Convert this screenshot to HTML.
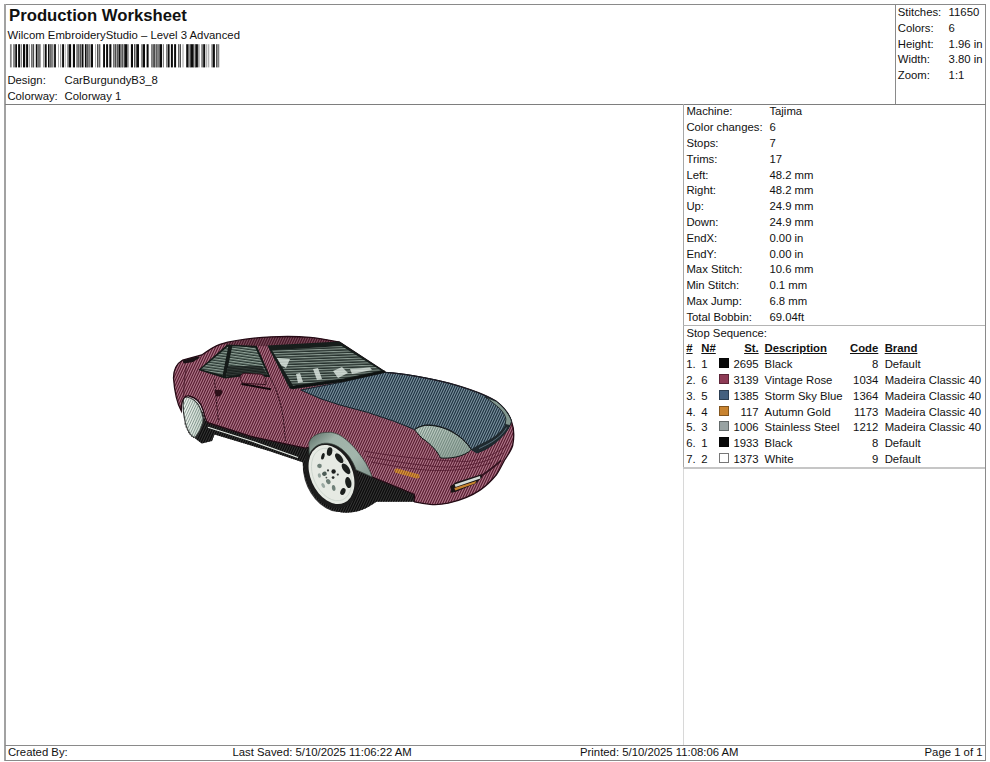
<!DOCTYPE html>
<html><head><meta charset="utf-8"><title>Production Worksheet</title>
<style>
html,body{margin:0;padding:0;background:#fff;}
body{width:990px;height:762px;position:relative;overflow:hidden;font-family:"Liberation Sans",sans-serif;color:#111;}
.t{position:absolute;white-space:nowrap;font-size:11.33px;line-height:1;}
.b{font-weight:bold;}
.u{text-decoration:underline;text-decoration-thickness:1px;text-underline-offset:1px;}
.ln{position:absolute;background:#8c8c8c;}
.sw{position:absolute;width:10px;height:10px;box-sizing:border-box;}
</style></head><body>

<div class="ln" style="left:4.5px;top:4px;width:981.5px;height:1.3px;background:#8a8a8a"></div>
<div class="ln" style="left:4.3px;top:4px;width:1.6px;height:757px;background:#a2a2a2"></div>
<div class="ln" style="left:985px;top:4px;width:1.2px;height:757px;background:#8a8a8a"></div>
<div class="ln" style="left:4.5px;top:760px;width:981.7px;height:1.2px;background:#8a8a8a"></div>
<div class="ln" style="left:4.5px;top:103.5px;width:981.5px;height:1.3px;background:#7e7e7e"></div>
<div class="ln" style="left:895.3px;top:4px;width:1.1px;height:100px;background:#8a8a8a"></div>
<div class="ln" style="left:4.5px;top:744.5px;width:981.5px;height:1.2px;background:#8a8a8a"></div>
<div class="ln" style="left:683px;top:104px;width:1.1px;height:364px;background:#a8a8a8"></div>
<div class="ln" style="left:683px;top:468px;width:1.1px;height:277px;background:#d8d8d8"></div>
<div class="ln" style="left:683px;top:325px;width:302px;height:1.1px;background:#b4b4b4"></div>
<div class="ln" style="left:683px;top:467px;width:302px;height:1.6px;background:#c6c6c6"></div>
<div class="t b" style="left:9.1px;top:7.56px;font-size:16.7px;">Production Worksheet</div>
<div class="t " style="left:7.60px;top:29.81px;">Wilcom EmbroideryStudio – Level 3 Advanced</div>
<div class="t " style="left:7.40px;top:74.81px;">Design:</div>
<div class="t " style="left:64.60px;top:74.81px;">CarBurgundyB3_8</div>
<div class="t " style="left:7.40px;top:90.61px;">Colorway:</div>
<div class="t " style="left:64.60px;top:90.61px;">Colorway 1</div>
<div class="t " style="left:897.80px;top:6.91px;">Stitches:</div>
<div class="t " style="left:948.60px;top:6.91px;">11650</div>
<div class="t " style="left:897.80px;top:22.71px;">Colors:</div>
<div class="t " style="left:948.60px;top:22.71px;">6</div>
<div class="t " style="left:897.80px;top:38.51px;">Height:</div>
<div class="t " style="left:948.60px;top:38.51px;">1.96 in</div>
<div class="t " style="left:897.80px;top:54.31px;">Width:</div>
<div class="t " style="left:948.60px;top:54.31px;">3.80 in</div>
<div class="t " style="left:897.80px;top:70.11px;">Zoom:</div>
<div class="t " style="left:948.60px;top:70.11px;">1:1</div>
<div class="t " style="left:686.40px;top:106.41px;">Machine:</div>
<div class="t " style="left:769.40px;top:106.41px;">Tajima</div>
<div class="t " style="left:686.40px;top:122.21px;">Color changes:</div>
<div class="t " style="left:769.40px;top:122.21px;">6</div>
<div class="t " style="left:686.40px;top:138.01px;">Stops:</div>
<div class="t " style="left:769.40px;top:138.01px;">7</div>
<div class="t " style="left:686.40px;top:153.81px;">Trims:</div>
<div class="t " style="left:769.40px;top:153.81px;">17</div>
<div class="t " style="left:686.40px;top:169.61px;">Left:</div>
<div class="t " style="left:769.40px;top:169.61px;">48.2 mm</div>
<div class="t " style="left:686.40px;top:185.41px;">Right:</div>
<div class="t " style="left:769.40px;top:185.41px;">48.2 mm</div>
<div class="t " style="left:686.40px;top:201.21px;">Up:</div>
<div class="t " style="left:769.40px;top:201.21px;">24.9 mm</div>
<div class="t " style="left:686.40px;top:217.01px;">Down:</div>
<div class="t " style="left:769.40px;top:217.01px;">24.9 mm</div>
<div class="t " style="left:686.40px;top:232.81px;">EndX:</div>
<div class="t " style="left:769.40px;top:232.81px;">0.00 in</div>
<div class="t " style="left:686.40px;top:248.61px;">EndY:</div>
<div class="t " style="left:769.40px;top:248.61px;">0.00 in</div>
<div class="t " style="left:686.40px;top:264.41px;">Max Stitch:</div>
<div class="t " style="left:769.40px;top:264.41px;">10.6 mm</div>
<div class="t " style="left:686.40px;top:280.21px;">Min Stitch:</div>
<div class="t " style="left:769.40px;top:280.21px;">0.1 mm</div>
<div class="t " style="left:686.40px;top:296.01px;">Max Jump:</div>
<div class="t " style="left:769.40px;top:296.01px;">6.8 mm</div>
<div class="t " style="left:686.40px;top:311.81px;">Total Bobbin:</div>
<div class="t " style="left:769.40px;top:311.81px;">69.04ft</div>
<div class="t " style="left:686.40px;top:327.61px;">Stop Sequence:</div>
<div class="t b u" style="left:686.30px;top:343.41px;">#</div>
<div class="t b u" style="left:701.30px;top:343.41px;">N#</div>
<div class="t b u" style="right:231.40px;top:343.41px;">St.</div>
<div class="t b u" style="left:764.60px;top:343.41px;">Description</div>
<div class="t b u" style="right:111.70px;top:343.41px;">Code</div>
<div class="t b u" style="left:884.70px;top:343.41px;">Brand</div>
<div class="t " style="left:686.30px;top:359.21px;">1.</div>
<div class="t " style="left:701.30px;top:359.21px;">1</div>
<div class="sw" style="left:719.3px;top:358.20px;background:#0a0a0a;border:1px solid rgba(0,0,0,0.35);"></div>
<div class="t " style="right:231.40px;top:359.21px;">2695</div>
<div class="t " style="left:764.60px;top:359.21px;">Black</div>
<div class="t " style="right:111.70px;top:359.21px;">8</div>
<div class="t " style="left:884.70px;top:359.21px;">Default</div>
<div class="t " style="left:686.30px;top:375.01px;">2.</div>
<div class="t " style="left:701.30px;top:375.01px;">6</div>
<div class="sw" style="left:719.3px;top:374.00px;background:#8e3a55;border:1px solid rgba(0,0,0,0.35);"></div>
<div class="t " style="right:231.40px;top:375.01px;">3139</div>
<div class="t " style="left:764.60px;top:375.01px;">Vintage Rose</div>
<div class="t " style="right:111.70px;top:375.01px;">1034</div>
<div class="t " style="left:884.70px;top:375.01px;">Madeira Classic 40</div>
<div class="t " style="left:686.30px;top:390.81px;">3.</div>
<div class="t " style="left:701.30px;top:390.81px;">5</div>
<div class="sw" style="left:719.3px;top:389.80px;background:#44607f;border:1px solid rgba(0,0,0,0.35);"></div>
<div class="t " style="right:231.40px;top:390.81px;">1385</div>
<div class="t " style="left:764.60px;top:390.81px;">Storm Sky Blue</div>
<div class="t " style="right:111.70px;top:390.81px;">1364</div>
<div class="t " style="left:884.70px;top:390.81px;">Madeira Classic 40</div>
<div class="t " style="left:686.30px;top:406.61px;">4.</div>
<div class="t " style="left:701.30px;top:406.61px;">4</div>
<div class="sw" style="left:719.3px;top:405.60px;background:#c8832f;border:1px solid rgba(0,0,0,0.35);"></div>
<div class="t " style="right:231.40px;top:406.61px;">117</div>
<div class="t " style="left:764.60px;top:406.61px;">Autumn Gold</div>
<div class="t " style="right:111.70px;top:406.61px;">1173</div>
<div class="t " style="left:884.70px;top:406.61px;">Madeira Classic 40</div>
<div class="t " style="left:686.30px;top:422.41px;">5.</div>
<div class="t " style="left:701.30px;top:422.41px;">3</div>
<div class="sw" style="left:719.3px;top:421.40px;background:#98a3a3;border:1px solid rgba(0,0,0,0.35);"></div>
<div class="t " style="right:231.40px;top:422.41px;">1006</div>
<div class="t " style="left:764.60px;top:422.41px;">Stainless Steel</div>
<div class="t " style="right:111.70px;top:422.41px;">1212</div>
<div class="t " style="left:884.70px;top:422.41px;">Madeira Classic 40</div>
<div class="t " style="left:686.30px;top:438.21px;">6.</div>
<div class="t " style="left:701.30px;top:438.21px;">1</div>
<div class="sw" style="left:719.3px;top:437.20px;background:#0a0a0a;border:1px solid rgba(0,0,0,0.35);"></div>
<div class="t " style="right:231.40px;top:438.21px;">1933</div>
<div class="t " style="left:764.60px;top:438.21px;">Black</div>
<div class="t " style="right:111.70px;top:438.21px;">8</div>
<div class="t " style="left:884.70px;top:438.21px;">Default</div>
<div class="t " style="left:686.30px;top:454.01px;">7.</div>
<div class="t " style="left:701.30px;top:454.01px;">2</div>
<div class="sw" style="left:719.3px;top:453.00px;background:#ffffff;border:1px solid #777;"></div>
<div class="t " style="right:231.40px;top:454.01px;">1373</div>
<div class="t " style="left:764.60px;top:454.01px;">White</div>
<div class="t " style="right:111.70px;top:454.01px;">9</div>
<div class="t " style="left:884.70px;top:454.01px;">Default</div>
<div class="t " style="left:7.90px;top:747.01px;">Created By:</div>
<div class="t " style="left:232.50px;top:747.01px;">Last Saved: 5/10/2025 11:06:22 AM</div>
<div class="t " style="left:580.00px;top:747.01px;">Printed: 5/10/2025 11:08:06 AM</div>
<div class="t " style="right:7.50px;top:747.01px;">Page 1 of 1</div>
<svg style="position:absolute;left:0;top:0" width="230" height="72" viewBox="0 0 230 72"><rect x="9.95" y="44.2" width="1.75" height="23.2" fill="#808080"/><rect x="13.10" y="44.2" width="1.80" height="23.2" fill="#808080"/><rect x="15.25" y="44.2" width="1.75" height="23.2" fill="#0c0c0c"/><rect x="18.10" y="44.2" width="2.10" height="23.2" fill="#0c0c0c"/><rect x="20.90" y="44.2" width="1.10" height="23.2" fill="#808080"/><rect x="23.00" y="44.2" width="2.20" height="23.2" fill="#0c0c0c"/><rect x="26.10" y="44.2" width="1.90" height="23.2" fill="#0c0c0c"/><rect x="28.70" y="44.2" width="1.05" height="23.2" fill="#808080"/><rect x="31.20" y="44.2" width="3.10" height="23.2" fill="#b4b4b4"/><rect x="31.40" y="44.2" width="0.85" height="23.2" fill="#3a3a3a"/><rect x="33.15" y="44.2" width="0.85" height="23.2" fill="#3a3a3a"/><rect x="35.80" y="44.2" width="1.70" height="23.2" fill="#0c0c0c"/><rect x="37.50" y="44.2" width="3.20" height="23.2" fill="#b4b4b4"/><rect x="37.70" y="44.2" width="0.85" height="23.2" fill="#3a3a3a"/><rect x="39.45" y="44.2" width="0.85" height="23.2" fill="#3a3a3a"/><rect x="43.20" y="44.2" width="1.40" height="23.2" fill="#808080"/><rect x="45.00" y="44.2" width="1.70" height="23.2" fill="#0c0c0c"/><rect x="48.00" y="44.2" width="1.60" height="23.2" fill="#0c0c0c"/><rect x="49.60" y="44.2" width="4.20" height="23.2" fill="#b4b4b4"/><rect x="49.80" y="44.2" width="0.85" height="23.2" fill="#3a3a3a"/><rect x="51.55" y="44.2" width="0.85" height="23.2" fill="#3a3a3a"/><rect x="54.10" y="44.2" width="1.80" height="23.2" fill="#0c0c0c"/><rect x="58.00" y="44.2" width="0.70" height="23.2" fill="#808080"/><rect x="60.20" y="44.2" width="1.00" height="23.2" fill="#808080"/><rect x="62.10" y="44.2" width="1.90" height="23.2" fill="#0c0c0c"/><rect x="64.80" y="44.2" width="0.70" height="23.2" fill="#808080"/><rect x="67.20" y="44.2" width="1.80" height="23.2" fill="#808080"/><rect x="69.00" y="44.2" width="2.10" height="23.2" fill="#0c0c0c"/><rect x="72.90" y="44.2" width="2.10" height="23.2" fill="#0c0c0c"/><rect x="76.40" y="44.2" width="5.30" height="23.2" fill="#b4b4b4"/><rect x="76.60" y="44.2" width="0.85" height="23.2" fill="#3a3a3a"/><rect x="78.35" y="44.2" width="0.85" height="23.2" fill="#3a3a3a"/><rect x="80.10" y="44.2" width="0.85" height="23.2" fill="#3a3a3a"/><rect x="81.70" y="44.2" width="1.80" height="23.2" fill="#0c0c0c"/><rect x="84.90" y="44.2" width="1.80" height="23.2" fill="#0c0c0c"/><rect x="86.70" y="44.2" width="4.20" height="23.2" fill="#b4b4b4"/><rect x="86.90" y="44.2" width="0.85" height="23.2" fill="#3a3a3a"/><rect x="88.65" y="44.2" width="0.85" height="23.2" fill="#3a3a3a"/><rect x="90.90" y="44.2" width="2.10" height="23.2" fill="#0c0c0c"/><rect x="95.20" y="44.2" width="0.70" height="23.2" fill="#808080"/><rect x="96.90" y="44.2" width="3.90" height="23.2" fill="#b4b4b4"/><rect x="97.10" y="44.2" width="0.85" height="23.2" fill="#3a3a3a"/><rect x="98.85" y="44.2" width="0.85" height="23.2" fill="#3a3a3a"/><rect x="103.10" y="44.2" width="1.90" height="23.2" fill="#0c0c0c"/><rect x="106.10" y="44.2" width="2.00" height="23.2" fill="#0c0c0c"/><rect x="109.30" y="44.2" width="2.10" height="23.2" fill="#0c0c0c"/><rect x="113.20" y="44.2" width="5.30" height="23.2" fill="#b4b4b4"/><rect x="113.40" y="44.2" width="0.85" height="23.2" fill="#3a3a3a"/><rect x="115.15" y="44.2" width="0.85" height="23.2" fill="#3a3a3a"/><rect x="116.90" y="44.2" width="0.85" height="23.2" fill="#3a3a3a"/><rect x="118.50" y="44.2" width="1.80" height="23.2" fill="#0c0c0c"/><rect x="120.30" y="44.2" width="4.60" height="23.2" fill="#b4b4b4"/><rect x="120.50" y="44.2" width="0.85" height="23.2" fill="#3a3a3a"/><rect x="122.25" y="44.2" width="0.85" height="23.2" fill="#3a3a3a"/><rect x="124.00" y="44.2" width="0.85" height="23.2" fill="#3a3a3a"/><rect x="124.90" y="44.2" width="2.10" height="23.2" fill="#0c0c0c"/><rect x="127.00" y="44.2" width="1.70" height="23.2" fill="#808080"/><rect x="130.90" y="44.2" width="2.10" height="23.2" fill="#0c0c0c"/><rect x="134.00" y="44.2" width="2.90" height="23.2" fill="#b4b4b4"/><rect x="134.20" y="44.2" width="0.85" height="23.2" fill="#3a3a3a"/><rect x="135.95" y="44.2" width="0.85" height="23.2" fill="#3a3a3a"/><rect x="136.90" y="44.2" width="2.10" height="23.2" fill="#0c0c0c"/><rect x="141.10" y="44.2" width="1.80" height="23.2" fill="#808080"/><rect x="142.90" y="44.2" width="2.10" height="23.2" fill="#0c0c0c"/><rect x="146.60" y="44.2" width="2.00" height="23.2" fill="#0c0c0c"/><rect x="151.00" y="44.2" width="1.70" height="23.2" fill="#808080"/><rect x="152.70" y="44.2" width="1.20" height="23.2" fill="#444"/><rect x="153.90" y="44.2" width="6.10" height="23.2" fill="#b4b4b4"/><rect x="154.10" y="44.2" width="0.85" height="23.2" fill="#3a3a3a"/><rect x="155.85" y="44.2" width="0.85" height="23.2" fill="#3a3a3a"/><rect x="157.60" y="44.2" width="0.85" height="23.2" fill="#3a3a3a"/><rect x="159.35" y="44.2" width="0.85" height="23.2" fill="#3a3a3a"/><rect x="160.00" y="44.2" width="2.00" height="23.2" fill="#0c0c0c"/><rect x="162.80" y="44.2" width="1.20" height="23.2" fill="#808080"/><rect x="166.00" y="44.2" width="1.20" height="23.2" fill="#808080"/><rect x="167.60" y="44.2" width="2.00" height="23.2" fill="#0c0c0c"/><rect x="170.90" y="44.2" width="2.00" height="23.2" fill="#0c0c0c"/><rect x="174.10" y="44.2" width="2.00" height="23.2" fill="#0c0c0c"/><rect x="178.10" y="44.2" width="2.90" height="23.2" fill="#b4b4b4"/><rect x="178.30" y="44.2" width="0.85" height="23.2" fill="#3a3a3a"/><rect x="180.05" y="44.2" width="0.85" height="23.2" fill="#3a3a3a"/><rect x="182.60" y="44.2" width="0.80" height="23.2" fill="#808080"/><rect x="186.20" y="44.2" width="2.00" height="23.2" fill="#0c0c0c"/><rect x="188.20" y="44.2" width="2.80" height="23.2" fill="#b4b4b4"/><rect x="188.40" y="44.2" width="0.85" height="23.2" fill="#3a3a3a"/><rect x="190.15" y="44.2" width="0.85" height="23.2" fill="#3a3a3a"/><rect x="191.00" y="44.2" width="2.00" height="23.2" fill="#0c0c0c"/><rect x="193.00" y="44.2" width="2.90" height="23.2" fill="#b4b4b4"/><rect x="193.20" y="44.2" width="0.85" height="23.2" fill="#3a3a3a"/><rect x="194.95" y="44.2" width="0.85" height="23.2" fill="#3a3a3a"/><rect x="195.90" y="44.2" width="2.00" height="23.2" fill="#0c0c0c"/><rect x="198.30" y="44.2" width="1.20" height="23.2" fill="#808080"/><rect x="201.20" y="44.2" width="2.00" height="23.2" fill="#808080"/><rect x="203.20" y="44.2" width="2.00" height="23.2" fill="#0c0c0c"/><rect x="206.40" y="44.2" width="0.80" height="23.2" fill="#808080"/><rect x="208.40" y="44.2" width="0.80" height="23.2" fill="#808080"/><rect x="211.30" y="44.2" width="1.60" height="23.2" fill="#808080"/><rect x="212.90" y="44.2" width="2.00" height="23.2" fill="#0c0c0c"/><rect x="216.10" y="44.2" width="1.20" height="23.2" fill="#444"/><rect x="217.30" y="44.2" width="2.00" height="23.2" fill="#808080"/></svg>
<svg style="position:absolute;left:150px;top:320px" width="400" height="210" viewBox="150 320 400 210">
<defs>
<pattern id="gl" width="8" height="2.5" patternUnits="userSpaceOnUse" patternTransform="rotate(-2)"><rect x="0" y="0" width="8" height="1.05" fill="#b4c6bb"/></pattern>
<pattern id="gl2" width="8" height="2.6" patternUnits="userSpaceOnUse" patternTransform="rotate(8)"><rect x="0" y="0" width="8" height="1.25" fill="#a9bcb0"/></pattern>
<linearGradient id="flare" x1="0" y1="0" x2="1" y2="0.8"><stop offset="0" stop-color="#566a62"/><stop offset="0.3" stop-color="#9fb2a8"/><stop offset="0.7" stop-color="#a3b6ac"/><stop offset="1" stop-color="#8a9d95"/></linearGradient>
<linearGradient id="hl" x1="0" y1="0" x2="1" y2="1"><stop offset="0" stop-color="#ccd9d0"/><stop offset="1" stop-color="#8fa39a"/></linearGradient>
<linearGradient id="rw" x1="0" y1="0" x2="1" y2="0"><stop offset="0" stop-color="#f4f8f4"/><stop offset="1" stop-color="#c6d4cb"/></linearGradient>
<clipPath id="sil"><path d="M173.5,378 C173.5,370 176,364 182.7,360 L201.8,355 C210,349 215,346 220,344.3 C232,340.8 250,338 271.6,336.8 C285,336.3 300,336.5 310,337.3 C320,338.3 330,340.3 339.5,342.1 L385.5,372.3 C400,373 430,378 449,383.2 C470,389 487,395.5 496.4,401.4 C505,408 510,416 511.5,421.4 C514,428 514.5,436 512.7,445.5 C511,451 507,456.5 504.6,460 C502,465 499,471 496.6,474.5 C492,480 486,486 480.4,489.9 C473,495 462,500 448.1,503.2 C443,504.2 436,505 430,504.3 C424,503.8 419,502.8 414.5,501.8 L376.4,501.8 C371,505.5 365,509.5 358,511.3 C347,514 334,513 323.5,505.5 C311,496 303.2,479 302.6,462.2 L269,451 L214.5,434.5 L212,441 L201.8,443.5 L195.5,438.8 C190,437 186,431 183.6,420 L181.3,411 C178,405 174.5,392 173.5,378 Z"/></clipPath>
<clipPath id="cb"><path d="M173.5,378 C173.5,370 176,364 182.7,360 L201.8,355 C210,349 215,346 220,344.3 C232,340.8 250,338 271.6,336.8 C285,336.3 300,336.5 310,337.3 C320,338.3 330,340.3 339.5,342.1 L385.5,372.3 C400,373 430,378 449,383.2 C470,389 487,395.5 496.4,401.4 C505,408 510,416 511.5,421.4 C514,428 514.5,436 512.7,445.5 C511,451 507,456.5 504.6,460 C502,465 499,471 496.6,474.5 C492,480 486,486 480.4,489.9 C473,495 462,500 448.1,503.2 C443,504.2 436,505 430,504.3 C424,503.8 419,502.8 414.5,501.8 L414.5,494.5 L370,476 L340,440 L305.5,448.2 L251,436.4 L208,422.7 C205,420 204.5,415 203,410 C201,403 196,397.5 189,396 C185,395.5 182.5,398 181.5,405 L181.3,411 C178,405 174.5,392 173.5,378 Z"/></clipPath>
<clipPath id="ch"><path d="M301,390 L343.4,381.8 L385.5,372.3 C400,373 430,378 449,383.2 C470,389 487,395.5 496.4,401.4 C505,408 510,416 511.5,421.4 L510,425.5 C505,436 494,444.4 485.9,449.2 L477,453 L471.3,449.5 C466,441.4 460,436.4 452,431.5 C444,427 434,424.5 425.5,425 C421,426 417,427.5 414.5,429.5 L394.5,421.4 L367.3,412.3 L340,405 L320,398.5 Z"/></clipPath>
<clipPath id="cl"><path d="M414.5,429.8 C417,427.5 421,426 425.5,425.4 C434,424.9 444,427.4 452,431.9 C460,436.4 466,441.4 471.3,449.5 C468,453 463,455.5 456,457 C449,458.3 445,458.3 440.5,458 C438,452 431,444 421.8,438 Z"/></clipPath>
<clipPath id="cr"><path d="M184.5,397 C192,397 198,402 200.5,409 C203,415 203.5,419 203,422 L200,430 L195.3,437.5 C189,436 185.5,428 183.5,412 C182.8,404 183,399 184.5,397 Z"/></clipPath>
</defs>
<path d="M200,414 L206,421 L251,435.5 L305.5,447.5 L340,440 L370,476 L414.5,494.5 L414.5,501.8 L376.4,501.8 C371,505.5 365,509.5 358,511.3 C347,514 334,513 323.5,505.5 C311,496 303.2,479 302.6,462.2 L269,451 L214.5,434.5 L212,441 L201.8,443.5 L195.5,438.8 L200.5,428 L203,420 Z" fill="#363636"/>
<ellipse cx="331.5" cy="476" rx="26.5" ry="37.5" transform="rotate(-24 331.5 476)" fill="#363636"/>
<g clip-path="url(#sil)"><path d="M142.8,514L190.4,412M145.3,514L192.9,412M147.8,514L195.4,412M150.3,514L197.9,412M152.8,514L200.4,412M155.3,514L202.9,412M157.8,514L205.4,412M160.3,514L207.9,412M162.8,514L210.4,412M165.3,514L212.9,412M167.8,514L215.4,412M170.3,514L217.9,412M172.8,514L220.4,412M175.3,514L222.9,412M177.8,514L225.4,412M180.3,514L227.9,412M182.8,514L230.4,412M185.3,514L232.9,412M187.8,514L235.4,412M190.3,514L237.9,412M192.8,514L240.4,412M195.3,514L242.9,412M197.8,514L245.4,412M200.3,514L247.9,412M202.8,514L250.4,412M205.3,514L252.9,412M207.8,514L255.4,412M210.3,514L257.9,412M212.8,514L260.4,412M215.3,514L262.9,412M217.8,514L265.4,412M220.3,514L267.9,412M222.8,514L270.4,412M225.3,514L272.9,412M227.8,514L275.4,412M230.3,514L277.9,412M232.8,514L280.4,412M235.3,514L282.9,412M237.8,514L285.4,412M240.3,514L287.9,412M242.8,514L290.4,412M245.3,514L292.9,412M247.8,514L295.4,412M250.3,514L297.9,412M252.8,514L300.4,412M255.3,514L302.9,412M257.8,514L305.4,412M260.3,514L307.9,412M262.8,514L310.4,412M265.3,514L312.9,412M267.8,514L315.4,412M270.3,514L317.9,412M272.8,514L320.4,412M275.3,514L322.9,412M277.8,514L325.4,412M280.3,514L327.9,412M282.8,514L330.4,412M285.3,514L332.9,412M287.8,514L335.4,412M290.3,514L337.9,412M292.8,514L340.4,412M295.3,514L342.9,412M297.8,514L345.4,412M300.3,514L347.9,412M302.8,514L350.4,412M305.3,514L352.9,412M307.8,514L355.4,412M310.3,514L357.9,412M312.8,514L360.4,412M315.3,514L362.9,412M317.8,514L365.4,412M320.3,514L367.9,412M322.8,514L370.4,412M325.3,514L372.9,412M327.8,514L375.4,412M330.3,514L377.9,412M332.8,514L380.4,412M335.3,514L382.9,412M337.8,514L385.4,412M340.3,514L387.9,412M342.8,514L390.4,412M345.3,514L392.9,412M347.8,514L395.4,412M350.3,514L397.9,412M352.8,514L400.4,412M355.3,514L402.9,412M357.8,514L405.4,412M360.3,514L407.9,412M362.8,514L410.4,412M365.3,514L412.9,412M367.8,514L415.4,412M370.3,514L417.9,412M372.8,514L420.4,412M375.3,514L422.9,412M377.8,514L425.4,412M380.3,514L427.9,412M382.8,514L430.4,412M385.3,514L432.9,412M387.8,514L435.4,412M390.3,514L437.9,412M392.8,514L440.4,412M395.3,514L442.9,412M397.8,514L445.4,412M400.3,514L447.9,412M402.8,514L450.4,412M405.3,514L452.9,412M407.8,514L455.4,412M410.3,514L457.9,412M412.8,514L460.4,412M415.3,514L462.9,412M417.8,514L465.4,412M420.3,514L467.9,412" fill="none" stroke="#050505" stroke-opacity="0.85" stroke-width="1.25"/></g>
<path d="M184.5,397 C192,397 198,402 200.5,409 C203,415 203.5,419 203,422 L200,430 L195.3,437.5 C189,436 185.5,428 183.5,412 C182.8,404 183,399 184.5,397 Z" fill="url(#rw)" stroke="#2a2a2a" stroke-width="1.2"/>
<g clip-path="url(#cr)"><path d="M157.8,439L178.3,395M160.3,439L180.8,395M162.8,439L183.3,395M165.3,439L185.8,395M167.8,439L188.3,395M170.3,439L190.8,395M172.8,439L193.3,395M175.3,439L195.8,395M177.8,439L198.3,395M180.3,439L200.8,395M182.8,439L203.3,395M185.3,439L205.8,395M187.8,439L208.3,395M190.3,439L210.8,395M192.8,439L213.3,395M195.3,439L215.8,395M197.8,439L218.3,395M200.3,439L220.8,395M202.8,439L223.3,395M205.3,439L225.8,395M207.8,439L228.3,395" fill="none" stroke="#6f857b" stroke-opacity="0.8" stroke-width="1.0"/></g>
<path d="M173.5,378 C173.5,370 176,364 182.7,360 L201.8,355 C210,349 215,346 220,344.3 C232,340.8 250,338 271.6,336.8 C285,336.3 300,336.5 310,337.3 C320,338.3 330,340.3 339.5,342.1 L385.5,372.3 C400,373 430,378 449,383.2 C470,389 487,395.5 496.4,401.4 C505,408 510,416 511.5,421.4 C514,428 514.5,436 512.7,445.5 C511,451 507,456.5 504.6,460 C502,465 499,471 496.6,474.5 C492,480 486,486 480.4,489.9 C473,495 462,500 448.1,503.2 C443,504.2 436,505 430,504.3 C424,503.8 419,502.8 414.5,501.8 L414.5,494.5 L370,476 L340,440 L305.5,448.2 L251,436.4 L208,422.7 C205,420 204.5,415 203,410 C201,403 196,397.5 189,396 C185,395.5 182.5,398 181.5,405 L181.3,411 C178,405 174.5,392 173.5,378 Z" fill="#b27a8d"/>
<g clip-path="url(#cb)"><path d="M89.0,506L168.8,335M91.5,506L171.3,335M94.0,506L173.8,335M96.5,506L176.3,335M99.0,506L178.8,335M101.5,506L181.3,335M104.0,506L183.8,335M106.5,506L186.3,335M109.0,506L188.8,335M111.5,506L191.3,335M114.0,506L193.8,335M116.5,506L196.3,335M119.0,506L198.8,335M121.5,506L201.3,335M124.0,506L203.8,335M126.5,506L206.3,335M129.0,506L208.8,335M131.5,506L211.3,335M134.0,506L213.8,335M136.5,506L216.3,335M139.0,506L218.8,335M141.5,506L221.3,335M144.0,506L223.8,335M146.5,506L226.3,335M149.0,506L228.8,335M151.5,506L231.3,335M154.0,506L233.8,335M156.5,506L236.3,335M159.0,506L238.8,335M161.5,506L241.3,335M164.0,506L243.8,335M166.5,506L246.3,335M169.0,506L248.8,335M171.5,506L251.3,335M174.0,506L253.8,335M176.5,506L256.3,335M179.0,506L258.8,335M181.5,506L261.3,335M184.0,506L263.8,335M186.5,506L266.3,335M189.0,506L268.8,335M191.5,506L271.3,335M194.0,506L273.8,335M196.5,506L276.3,335M199.0,506L278.8,335M201.5,506L281.3,335M204.0,506L283.8,335M206.5,506L286.3,335M209.0,506L288.8,335M211.5,506L291.3,335M214.0,506L293.8,335M216.5,506L296.3,335M219.0,506L298.8,335M221.5,506L301.3,335M224.0,506L303.8,335M226.5,506L306.3,335M229.0,506L308.8,335M231.5,506L311.3,335M234.0,506L313.8,335M236.5,506L316.3,335M239.0,506L318.8,335M241.5,506L321.3,335M244.0,506L323.8,335M246.5,506L326.3,335M249.0,506L328.8,335M251.5,506L331.3,335M254.0,506L333.8,335M256.5,506L336.3,335M259.0,506L338.8,335M261.5,506L341.3,335M264.0,506L343.8,335M266.5,506L346.3,335M269.0,506L348.8,335M271.5,506L351.3,335M274.0,506L353.8,335M276.5,506L356.3,335M279.0,506L358.8,335M281.5,506L361.3,335M284.0,506L363.8,335M286.5,506L366.3,335M289.0,506L368.8,335M291.5,506L371.3,335M294.0,506L373.8,335M296.5,506L376.3,335M299.0,506L378.8,335M301.5,506L381.3,335M304.0,506L383.8,335M306.5,506L386.3,335M309.0,506L388.8,335M311.5,506L391.3,335M314.0,506L393.8,335M316.5,506L396.3,335M319.0,506L398.8,335M321.5,506L401.3,335M324.0,506L403.8,335M326.5,506L406.3,335M329.0,506L408.8,335M331.5,506L411.3,335M334.0,506L413.8,335M336.5,506L416.3,335M339.0,506L418.8,335M341.5,506L421.3,335M344.0,506L423.8,335M346.5,506L426.3,335M349.0,506L428.8,335M351.5,506L431.3,335M354.0,506L433.8,335M356.5,506L436.3,335M359.0,506L438.8,335M361.5,506L441.3,335M364.0,506L443.8,335M366.5,506L446.3,335M369.0,506L448.8,335M371.5,506L451.3,335M374.0,506L453.8,335M376.5,506L456.3,335M379.0,506L458.8,335M381.5,506L461.3,335M384.0,506L463.8,335M386.5,506L466.3,335M389.0,506L468.8,335M391.5,506L471.3,335M394.0,506L473.8,335M396.5,506L476.3,335M399.0,506L478.8,335M401.5,506L481.3,335M404.0,506L483.8,335M406.5,506L486.3,335M409.0,506L488.8,335M411.5,506L491.3,335M414.0,506L493.8,335M416.5,506L496.3,335M419.0,506L498.8,335M421.5,506L501.3,335M424.0,506L503.8,335M426.5,506L506.3,335M429.0,506L508.8,335M431.5,506L511.3,335M434.0,506L513.8,335M436.5,506L516.3,335M439.0,506L518.8,335M441.5,506L521.3,335M444.0,506L523.8,335M446.5,506L526.3,335M449.0,506L528.8,335M451.5,506L531.3,335M454.0,506L533.8,335M456.5,506L536.3,335M459.0,506L538.8,335M461.5,506L541.3,335M464.0,506L543.8,335M466.5,506L546.3,335M469.0,506L548.8,335M471.5,506L551.3,335M474.0,506L553.8,335M476.5,506L556.3,335M479.0,506L558.8,335M481.5,506L561.3,335M484.0,506L563.8,335M486.5,506L566.3,335M489.0,506L568.8,335M491.5,506L571.3,335M494.0,506L573.8,335M496.5,506L576.3,335M499.0,506L578.8,335M501.5,506L581.3,335M504.0,506L583.8,335M506.5,506L586.3,335M509.0,506L588.8,335M511.5,506L591.3,335M514.0,506L593.8,335M516.5,506L596.3,335M519.0,506L598.8,335" fill="none" stroke="#4e1226" stroke-opacity="0.88" stroke-width="1.2"/></g>
<path d="M301,390 L343.4,381.8 L385.5,372.3 C400,373 430,378 449,383.2 C470,389 487,395.5 496.4,401.4 C505,408 510,416 511.5,421.4 L510,425.5 C505,436 494,444.4 485.9,449.2 L477,453 L471.3,449.5 C466,441.4 460,436.4 452,431.5 C444,427 434,424.5 425.5,425 C421,426 417,427.5 414.5,429.5 L394.5,421.4 L367.3,412.3 L340,405 L320,398.5 Z" fill="#7d94a1"/>
<g clip-path="url(#ch)"><path d="M258.3,454L297.0,371M260.8,454L299.5,371M263.3,454L302.0,371M265.8,454L304.5,371M268.3,454L307.0,371M270.8,454L309.5,371M273.3,454L312.0,371M275.8,454L314.5,371M278.3,454L317.0,371M280.8,454L319.5,371M283.3,454L322.0,371M285.8,454L324.5,371M288.3,454L327.0,371M290.8,454L329.5,371M293.3,454L332.0,371M295.8,454L334.5,371M298.3,454L337.0,371M300.8,454L339.5,371M303.3,454L342.0,371M305.8,454L344.5,371M308.3,454L347.0,371M310.8,454L349.5,371M313.3,454L352.0,371M315.8,454L354.5,371M318.3,454L357.0,371M320.8,454L359.5,371M323.3,454L362.0,371M325.8,454L364.5,371M328.3,454L367.0,371M330.8,454L369.5,371M333.3,454L372.0,371M335.8,454L374.5,371M338.3,454L377.0,371M340.8,454L379.5,371M343.3,454L382.0,371M345.8,454L384.5,371M348.3,454L387.0,371M350.8,454L389.5,371M353.3,454L392.0,371M355.8,454L394.5,371M358.3,454L397.0,371M360.8,454L399.5,371M363.3,454L402.0,371M365.8,454L404.5,371M368.3,454L407.0,371M370.8,454L409.5,371M373.3,454L412.0,371M375.8,454L414.5,371M378.3,454L417.0,371M380.8,454L419.5,371M383.3,454L422.0,371M385.8,454L424.5,371M388.3,454L427.0,371M390.8,454L429.5,371M393.3,454L432.0,371M395.8,454L434.5,371M398.3,454L437.0,371M400.8,454L439.5,371M403.3,454L442.0,371M405.8,454L444.5,371M408.3,454L447.0,371M410.8,454L449.5,371M413.3,454L452.0,371M415.8,454L454.5,371M418.3,454L457.0,371M420.8,454L459.5,371M423.3,454L462.0,371M425.8,454L464.5,371M428.3,454L467.0,371M430.8,454L469.5,371M433.3,454L472.0,371M435.8,454L474.5,371M438.3,454L477.0,371M440.8,454L479.5,371M443.3,454L482.0,371M445.8,454L484.5,371M448.3,454L487.0,371M450.8,454L489.5,371M453.3,454L492.0,371M455.8,454L494.5,371M458.3,454L497.0,371M460.8,454L499.5,371M463.3,454L502.0,371M465.8,454L504.5,371M468.3,454L507.0,371M470.8,454L509.5,371M473.3,454L512.0,371M475.8,454L514.5,371M478.3,454L517.0,371M480.8,454L519.5,371M483.3,454L522.0,371M485.8,454L524.5,371M488.3,454L527.0,371M490.8,454L529.5,371M493.3,454L532.0,371M495.8,454L534.5,371M498.3,454L537.0,371M500.8,454L539.5,371M503.3,454L542.0,371M505.8,454L544.5,371M508.3,454L547.0,371M510.8,454L549.5,371M513.3,454L552.0,371M515.8,454L554.5,371" fill="none" stroke="#172a38" stroke-opacity="0.9" stroke-width="1.2"/></g>
<path d="M414.5,429.8 C417,427.5 421,426 425.5,425.4 C434,424.9 444,427.4 452,431.9 C460,436.4 466,441.4 471.3,449.5 C468,453 463,455.5 456,457 C449,458.3 445,458.3 440.5,458 C438,452 431,444 421.8,438 Z" fill="url(#hl)"/>
<g clip-path="url(#cl)"><path d="M393.4,459L409.8,424M395.9,459L412.3,424M398.4,459L414.8,424M400.9,459L417.3,424M403.4,459L419.8,424M405.9,459L422.3,424M408.4,459L424.8,424M410.9,459L427.3,424M413.4,459L429.8,424M415.9,459L432.3,424M418.4,459L434.8,424M420.9,459L437.3,424M423.4,459L439.8,424M425.9,459L442.3,424M428.4,459L444.8,424M430.9,459L447.3,424M433.4,459L449.8,424M435.9,459L452.3,424M438.4,459L454.8,424M440.9,459L457.3,424M443.4,459L459.8,424M445.9,459L462.3,424M448.4,459L464.8,424M450.9,459L467.3,424M453.4,459L469.8,424M455.9,459L472.3,424M458.4,459L474.8,424M460.9,459L477.3,424M463.4,459L479.8,424M465.9,459L482.3,424M468.4,459L484.8,424M470.9,459L487.3,424M473.4,459L489.8,424M475.9,459L492.3,424" fill="none" stroke="#6c8279" stroke-opacity="0.85" stroke-width="1.1"/></g>
<path d="M173.5,378 C173.5,370 176,364 182.7,360 L201.8,355 C210,349 215,346 220,344.3 C232,340.8 250,338 271.6,336.8 C285,336.3 300,336.5 310,337.3 C320,338.3 330,340.3 339.5,342.1 L385.5,372.3 C400,373 430,378 449,383.2 C470,389 487,395.5 496.4,401.4 C505,408 510,416 511.5,421.4 C514,428 514.5,436 512.7,445.5 C511,451 507,456.5 504.6,460 C502,465 499,471 496.6,474.5 C492,480 486,486 480.4,489.9 C473,495 462,500 448.1,503.2 C443,504.2 436,505 430,504.3 C424,503.8 419,502.8 414.5,501.8 L414.5,494.5 L370,476 L340,440 L305.5,448.2 L251,436.4 L208,422.7 C205,420 204.5,415 203,410 C201,403 196,397.5 189,396 C185,395.5 182.5,398 181.5,405 L181.3,411 C178,405 174.5,392 173.5,378 Z" fill="none" stroke="#240b15" stroke-width="1.3"/>
<path d="M301,390 L343.4,381.8 L385.5,372.3 C400,373 430,378 449,383.2 C470,389 487,395.5 496.4,401.4 C505,408 510,416 511.5,421.4 L510,425.5 C505,436 494,444.4 485.9,449.2 L477,453 L471.3,449.5 C466,441.4 460,436.4 452,431.5 C444,427 434,424.5 425.5,425 C421,426 417,427.5 414.5,429.5 L394.5,421.4 L367.3,412.3 L340,405 L320,398.5 Z" fill="none" stroke="#17222a" stroke-width="1"/>
<path d="M414.5,429.8 C417,427.5 421,426 425.5,425.4 C434,424.9 444,427.4 452,431.9 C460,436.4 466,441.4 471.3,449.5 C468,453 463,455.5 456,457 C449,458.3 445,458.3 440.5,458 C438,452 431,444 421.8,438 Z" fill="none" stroke="#15191a" stroke-width="1"/>
<path d="M220,344.3 C232,340.8 250,338 271.6,336.8 C285,336.3 300,336.5 310,337.3 C320,338.3 330,340.3 339.5,342.1 L339.3,342.6 L267.3,346.2 L256.8,346 L227.2,344.6 Z" fill="#2a0a16" opacity="0.38"/>
<path d="M182.3,360.6 L197,356.4 L200,357.4 L193,362 L184,363.6 Z" fill="#1a1216"/>
<path d="M186.6,366 C184.5,376 183.5,388 183.8,397" fill="none" stroke="#3e1424" stroke-width="1" opacity="0.7"/>
<path d="M198.3,370 L213,357 L227.2,344.4 L256.8,345.8 L270.3,377 L241,376.5 L225,378.6 Z" fill="#141a18"/>
<path d="M201,369.2 L228.3,346.3 L222.6,375.2 Z" fill="#2a3833"/><path d="M201,369.2 L228.3,346.3 L222.6,375.2 Z" fill="url(#gl2)" opacity="0.75"/>
<path d="M232.3,346.2 L255.2,347.4 L267.6,375 L241,374.5 L226,376.6 Z" fill="#2a3833"/><path d="M232.3,346.2 L255.2,347.4 L267.6,375 L241,374.5 L226,376.6 Z" fill="url(#gl2)" opacity="0.8"/>
<path d="M228,366 L262,366 L267.6,375 L226,376.6 Z" fill="#141a18" opacity="0.75"/>
<path d="M240.3,376.5 C241,374 243,373.2 246,373.3 L261,374.3 C264,375 266,378 266,384.6 L243,383.2 C241,381.5 240,379 240.3,376.5 Z" fill="#b27a8d" stroke="#2a0f18" stroke-width="0.9"/>
<clipPath id="cm"><path d="M240.3,376.5 C241,374 243,373.2 246,373.3 L261,374.3 C264,375 266,378 266,384.6 L243,383.2 C241,381.5 240,379 240.3,376.5 Z"/></clipPath>
<g clip-path="url(#cm)"><path d="M227.5,386L234.0,372M230.0,386L236.5,372M232.5,386L239.0,372M235.0,386L241.5,372M237.5,386L244.0,372M240.0,386L246.5,372M242.5,386L249.0,372M245.0,386L251.5,372M247.5,386L254.0,372M250.0,386L256.5,372M252.5,386L259.0,372M255.0,386L261.5,372M257.5,386L264.0,372M260.0,386L266.5,372M262.5,386L269.0,372M265.0,386L271.5,372M267.5,386L274.0,372M270.0,386L276.5,372" fill="none" stroke="#4e1226" stroke-opacity="0.88" stroke-width="1.2"/></g>
<path d="M241.5,384 L270.8,389.2" stroke="#15090d" stroke-width="2" fill="none"/>
<path d="M214.5,379.5 C215.5,392 217,408 218.5,421.5" fill="none" stroke="#2e0f1b" stroke-width="0.9" stroke-dasharray="2.2 1"/>
<path d="M270,377.5 C276,388 281,402 283.5,420 L285.5,441" fill="none" stroke="#2e0f1b" stroke-width="0.9" stroke-dasharray="2.4 1"/>
<path d="M214.5,390 L221.5,389.8 L222.5,393 L219.5,396.5 L216,396 Z" fill="#2b1018"/>
<path d="M267.3,345.6 L339.3,341.6 L386,372 L343.4,381.8 L292.5,389.2 L289,387.2 Z" fill="#161d1b"/>
<path d="M272,350.3 L341.5,346 L381,370.6 L343,378.6 L293,385.6 Z" fill="#27322e"/><path d="M272,350.3 L341.5,346 L381,370.6 L343,378.6 L293,385.6 Z" fill="url(#gl)" opacity="0.72"/>
<path d="M277,358 L290,359 L286,368 L281,365 Z M313,369 L318,368 L322,379 L317,380 Z M333,371 L342,367 L348,373 L338,378 Z M350,369 L370,367.5 L372,370 L352,374 Z M296,374 L300,373 L303,382 L298,383 Z" fill="#dfe9e2" opacity="0.8"/>
<path d="M289.5,387.8 L343.4,380.4 L385,371.6" fill="none" stroke="#0e1211" stroke-width="2"/>
<path d="M485,396.8 L489.6,400.1 L499.7,408.4 C503.5,412.5 505.7,416 505.9,419.5 L505.2,424.5 L510,425.5 L511.5,421.4 C510,416 505,408 496.4,401.4 Z" fill="#82978f" stroke="#141c1e" stroke-width="0.8"/>
<path d="M505.2,424.5 C504,428.5 499,433 495.1,435.9 C491,438.8 487,440.8 484.1,442.3 L474,447.6 L471.3,449.5 L477,453 L485.9,449.2 C494,444.4 505,436 510,425.5 Z" fill="#1b2428" opacity="0.9"/>
<path d="M506.6,427.5 C503,434.5 495,440.5 487,444.6 L479,448.6" fill="none" stroke="#5d7482" stroke-width="1" opacity="0.9"/>
<path d="M364,451 C390,456 430,460.5 467,461.5 C482,460 498,453.5 508,444" fill="none" stroke="#4a1428" stroke-width="0.9" opacity="0.75"/>
<path d="M367,456.4 C395,462 430,467 449,467 C470,466.5 490,461 503,453" fill="none" stroke="#4a1428" stroke-width="0.9" opacity="0.75"/>
<path d="M371,462 C400,467.5 420,470 434.5,470.5 C455,471 476,468.5 492,462.5" fill="none" stroke="#4a1428" stroke-width="0.9" opacity="0.75"/>
<path d="M394.3,469.6 L397,468.5 L419,474.6 L419.6,477.4 L417,478.6 L395,472.6 Z" fill="#dd9a3e"/>
<clipPath id="ck"><path d="M394.3,469.6 L397,468.5 L419,474.6 L419.6,477.4 L417,478.6 L395,472.6 Z"/></clipPath>
<g clip-path="url(#ck)"><path d="M383.7,480L389.7,467M386.2,480L392.2,467M388.7,480L394.7,467M391.2,480L397.2,467M393.7,480L399.7,467M396.2,480L402.2,467M398.7,480L404.7,467M401.2,480L407.2,467M403.7,480L409.7,467M406.2,480L412.2,467M408.7,480L414.7,467M411.2,480L417.2,467M413.7,480L419.7,467M416.2,480L422.2,467M418.7,480L424.7,467M421.2,480L427.2,467M423.7,480L429.7,467" fill="none" stroke="#7a3c10" stroke-opacity="0.7" stroke-width="1.1"/></g>
<path d="M450.3,486.2 L456,482.3 L481.3,474.3 L482.3,477 L476,483.2 L456,491.8 L451,492.8 Z" fill="#1b1416"/>
<path d="M454.6,484.6 L480,476 L480.4,478.4 L455.6,487 Z" fill="#d5ddd6"/>
<path d="M454.4,488 L476.4,481 L475,483.4 L455.2,490.6 Z" fill="#c8842e"/>
<path d="M481.5,475.8 C487,472 494,467 501.2,460.4" fill="none" stroke="#2a0d18" stroke-width="1.9" opacity="0.9"/>
<ellipse cx="331.5" cy="474.5" rx="25.4" ry="35" transform="rotate(-24 331.5 474.5)" fill="#1c1c1c"/>
<path d="M308.9,442.8 L310.8,439.0 L313.7,436.3 L317.0,434.4 L321.0,433.0 L326.0,432.4 L330.7,432.3 L335.0,433.2 L338.8,434.7 L343.0,437.3 L346.9,440.4 L351.0,444.2 L355.0,448.4 L359.0,453.4 L363.0,458.9 L366.0,463.6 L368.7,468.6 L370.5,472.6 L372.2,477.0 L355.9,469.7 L355.3,467.8 L354.5,466.0 L353.7,464.3 L352.9,462.6 L351.9,460.9 L350.9,459.2 L349.9,457.6 L348.7,456.1 L347.6,454.7 L346.3,453.3 L345.0,451.9 L343.7,450.7 L342.4,449.5 L341.0,448.5 L339.5,447.5 L338.1,446.6 L336.6,445.8 L335.1,445.1 L333.6,444.5 L332.1,444.0 L330.6,443.7 L329.1,443.4 L327.7,443.2 L326.2,443.2 L324.7,443.2 L323.3,443.4 L321.9,443.6 L320.6,444.0 L319.3,444.5 L318.0,445.0 L316.8,445.7 L315.6,446.5 L314.5,447.4 L313.4,448.3 L312.5,449.4 L311.5,450.6 L310.7,451.8 L309.9,453.1 L309.2,454.5 Z" fill="url(#flare)" stroke="#39463f" stroke-width="0.7"/>
<path d="M208,427.2 L253,441.5 L298,457.6" fill="none" stroke="#e6ece6" stroke-width="1.1"/>
<g transform="rotate(-24 331.5 474.5)"><ellipse cx="331.5" cy="474.5" rx="21" ry="31" fill="#e6eae3"/><ellipse cx="331.5" cy="474.5" rx="18.2" ry="27.6" fill="none" stroke="#cbd4cc" stroke-width="0.8"/></g>
<g fill="#1b1f1d">
<ellipse cx="329.6" cy="451.6" rx="2.7" ry="4.3" transform="rotate(10 329.6 451.6)"/>
<ellipse cx="339.2" cy="458.2" rx="2.9" ry="5.8" transform="rotate(-38 339.2 458.2)"/>
<ellipse cx="346" cy="468.8" rx="3" ry="6.2" transform="rotate(-36 346 468.8)"/>
<ellipse cx="348.3" cy="482.6" rx="3" ry="5.6" transform="rotate(-12 348.3 482.6)"/>
<ellipse cx="342.9" cy="491.6" rx="2.4" ry="3.6" transform="rotate(26 342.9 491.6)"/>
<ellipse cx="322.9" cy="456.3" rx="1.6" ry="3.3" transform="rotate(15 322.9 456.3)"/>
</g>
<g fill="#6f8078">
<ellipse cx="319.5" cy="465.9" rx="2.3" ry="2.2" transform="rotate(10 319.5 465.9)"/>
<ellipse cx="324.4" cy="473.8" rx="2.4" ry="2.2" transform="rotate(-20 324.4 473.8)" fill="#4d5c56"/>
<ellipse cx="328.3" cy="481.6" rx="2.1" ry="2.7" transform="rotate(-28 328.3 481.6)"/>
<ellipse cx="333.7" cy="487.9" rx="1.8" ry="3" transform="rotate(-8 333.7 487.9)"/>
<ellipse cx="319.4" cy="475.5" rx="1.6" ry="2.2" transform="rotate(-10 319.4 475.5)" fill="#9aa9a2"/>
<ellipse cx="323.2" cy="485.5" rx="1.6" ry="2.6" transform="rotate(-30 323.2 485.5)" fill="#9aa9a2"/>
</g>
<circle cx="333.6" cy="471.5" r="2.2" fill="#1b1d1c"/><circle cx="333.1" cy="477.6" r="1.4" fill="#2a2d2c"/><circle cx="328" cy="470.4" r="1.1" fill="#3e4241"/><circle cx="337.8" cy="474.6" r="1.1" fill="#3e4241"/><circle cx="326.4" cy="477.6" r="0.9" fill="#4a4e4d"/>
</svg>
</body></html>
